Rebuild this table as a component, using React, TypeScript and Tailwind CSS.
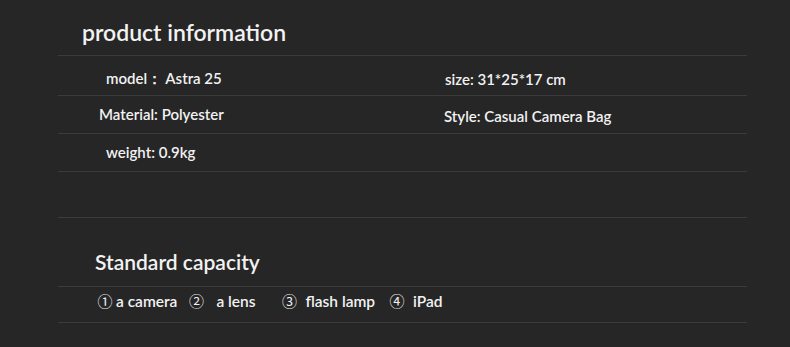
const specs = [
  [
    { text: "model：  Astra 25", cls: "pl-[48px] pt-[6px]" },
    { text: "size: 31*25*17 cm", cls: "pl-[46px] pt-[8px]" },
  ],
  [
    { text: "Material: Polyester", cls: "pl-[41px] pt-[0px]" },
    { text: "Style: Casual Camera Bag", cls: "pl-[45px] pt-[4px]" },
  ],
  [{ text: "weight: 0.9kg", cls: "pl-[48px] pt-[0px]" }, null],
];

function Num({ n }: { n: string }) {
  return (
    <span
      className="inline-flex w-[14px] justify-center text-[15px] font-normal"
      style={{ fontFamily: "'Noto Sans CJK SC', sans-serif" }}
    >
      {n}
    </span>
  );
}

export default function App() {
  return (
    <div
      className="w-[790px] h-[347px] bg-[#262626] text-[#f2f2f2] overflow-hidden"
      style={{ fontFamily: "Lato, 'Open Sans', sans-serif" }}
    >
      <div className="ml-[58px] w-[689px] flex flex-col">
        <div className="h-[56px] border-b border-[#3b3b3b] flex items-end pb-[11px] pl-[24px]">
          <h2 className="text-[23px] font-semibold leading-none">product information</h2>
        </div>
        {specs.map((row, i) => (
          <div
            key={i}
            className={`grid grid-cols-[341px_1fr] border-b border-[#3b3b3b] ${i === 0 ? "h-[40px]" : "h-[38px]"}`}
          >
            {row.map((cell, j) => (
              <div key={j} className={`flex items-center text-[15px] font-semibold ${cell ? cell.cls : ""}`}>
                {cell?.text}
              </div>
            ))}
          </div>
        ))}
        <div className="h-[46px] border-b border-[#3b3b3b]" />
        <div className="h-[69px] border-b border-[#3b3b3b] flex items-center pl-[37px] pt-[19px]">
          <h3 className="text-[21px] font-semibold leading-none">Standard capacity</h3>
        </div>
        <div className="h-[36px] border-b border-[#3b3b3b] flex items-center pl-[40px] pb-[6px] text-[15.5px] font-semibold">
          <Num n="①" />
          <span className="ml-[4px]">a camera</span>
          <span className="ml-[12px]"><Num n="②" /></span>
          <span className="ml-[13px]">a lens</span>
          <span className="ml-[27px]"><Num n="③" /></span>
          <span className="ml-[9px]">flash lamp</span>
          <span className="ml-[15px]"><Num n="④" /></span>
          <span className="ml-[9px]">iPad</span>
        </div>
      </div>
    </div>
  );
}
